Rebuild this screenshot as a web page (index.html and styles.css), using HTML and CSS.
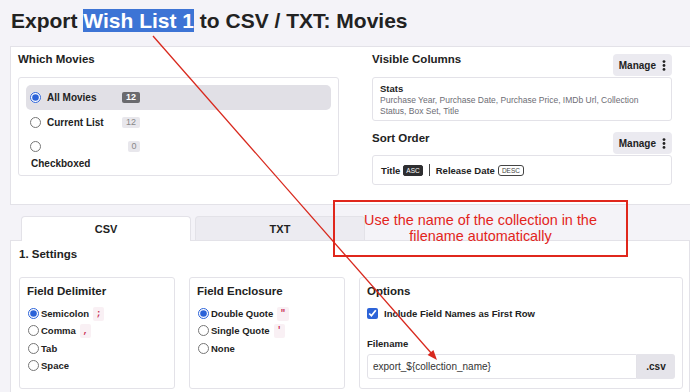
FILE: index.html
```html
<!DOCTYPE html>
<html lang="en">

<head>
    <meta charset="UTF-8">
    <meta name="viewport" content="width=device-width, initial-scale=1.0">
    <title>Export Wish List 1 to CSV / TXT: Movies</title>
    <link rel="stylesheet" href="styles.css">
</head>

<body>
    <h1 class="page-title">Export <span class="selected-text">Wish List 1</span> to CSV / TXT: Movies</h1>

    <!-- Which movies / columns / sort -->
    <div class="panel panel-top">
        <div class="col-left">
            <h2 class="section-title">Which Movies</h2>
            <div class="box choice-box">
                <label class="choice-row active">
                    <input type="radio" name="which" checked>
                    <span class="choice-main"><span>All Movies</span><span class="count dark">12</span></span>
                </label>
                <label class="choice-row">
                    <input type="radio" name="which">
                    <span class="choice-main"><span>Current List</span><span class="count wide">12</span></span>
                </label>
                <label class="choice-row">
                    <input type="radio" name="which">
                    <span class="choice-main"><span></span><span class="count">0</span></span>
                </label>
                <div class="choice-extra">Checkboxed</div>
            </div>
        </div>

        <div class="col-right">
            <div class="head-row">
                <h2 class="section-title">Visible Columns</h2>
                <button class="manage-btn">Manage
                    <svg width="4" height="11" viewBox="0 0 4 11"><circle cx="2" cy="1.6" r="1.4" fill="#222"/><circle cx="2" cy="5.5" r="1.4" fill="#222"/><circle cx="2" cy="9.4" r="1.4" fill="#222"/></svg>
                </button>
            </div>
            <div class="box columns-box">
                <div class="columns-title">Stats</div>
                <div class="columns-list">Purchase Year, Purchase Date, Purchase Price, IMDb Url, Collection Status, Box Set, Title</div>
            </div>

            <div class="head-row sort-head">
                <h2 class="section-title">Sort Order</h2>
                <button class="manage-btn">Manage
                    <svg width="4" height="11" viewBox="0 0 4 11"><circle cx="2" cy="1.6" r="1.4" fill="#222"/><circle cx="2" cy="5.5" r="1.4" fill="#222"/><circle cx="2" cy="9.4" r="1.4" fill="#222"/></svg>
                </button>
            </div>
            <div class="box sort-box">
                <span class="sort-field">Title</span>
                <span class="dir-tag filled">ASC</span>
                <span class="sort-sep"></span>
                <span class="sort-field">Release Date</span>
                <span class="dir-tag outlined">DESC</span>
            </div>
        </div>
    </div>

    <!-- Format tabs -->
    <div class="tabs">
        <div class="tab active">CSV</div>
        <div class="tab">TXT</div>
    </div>

    <div class="panel panel-settings">
        <h2 class="section-title">1. Settings</h2>
        <div class="cards">
            <div class="card card-delimiter">
                <h3 class="card-title">Field Delimiter</h3>
                <label class="opt-row"><input type="radio" name="delim" checked>Semicolon<code class="chip">;</code></label>
                <label class="opt-row"><input type="radio" name="delim">Comma<code class="chip">,</code></label>
                <label class="opt-row"><input type="radio" name="delim">Tab</label>
                <label class="opt-row"><input type="radio" name="delim">Space</label>
            </div>
            <div class="card card-enclosure">
                <h3 class="card-title">Field Enclosure</h3>
                <label class="opt-row"><input type="radio" name="encl" checked>Double Quote<code class="chip">"</code></label>
                <label class="opt-row"><input type="radio" name="encl">Single Quote<code class="chip">'</code></label>
                <label class="opt-row"><input type="radio" name="encl">None</label>
            </div>
            <div class="card card-options">
                <h3 class="card-title">Options</h3>
                <label class="opt-row check-row"><input type="checkbox" checked>Include Field Names as First Row</label>
                <div class="field-label">Filename</div>
                <div class="input-group">
                    <input class="text-input" type="text" value="export_${collection_name}">
                    <span class="input-suffix">.csv</span>
                </div>
            </div>
        </div>
    </div>

    <!-- Annotation overlay -->
    <div class="note-box">Use the name of the collection in the<br>filename automatically</div>
    <svg class="note-arrow" width="690" height="392" viewBox="0 0 690 392">
        <line x1="153" y1="36" x2="432" y2="354" stroke="#d8281d" stroke-width="1.3"/>
        <polygon points="437,360 427.6,355 433.4,349.9" fill="#d8281d"/>
    </svg>
</body>

</html>
```

FILE: styles.css
```css
/* ---- Base ---- */

body {
    margin: 0;
    position: relative;
    background-color: #f4f3f8;
    font-family: "Liberation Sans", Arial, sans-serif;
    color: #222;
    overflow: hidden;
}

.page-title {
    margin: 9px 0 13px 11px;
    font-size: 21px;
    font-weight: bold;
    line-height: 24px;
    color: #222;
}

.selected-text {
    background-color: #3d74d5;
    color: #fff;
}

.panel {
    margin-left: 10px;
    width: 680px;
    background-color: #fff;
    border: 1px solid #e3e2e8;
}

.section-title {
    margin: 0;
    font-size: 11.5px;
    line-height: 14px;
    font-weight: bold;
}

.box {
    border: 1px solid #e3e2e8;
    border-radius: 3px;
    background-color: #fff;
}

/* ---- Top panel ---- */

.panel-top {
    display: flex;
    gap: 33px;
    padding: 5px 0 19px 7px;
}

.col-left {
    width: 321px;
}

.col-right {
    width: 300px;
}

.choice-box {
    margin-top: 11px;
    padding: 7px 7px 5px;
}

.choice-row {
    display: flex;
    align-items: center;
    height: 24px;
    padding-left: 4px;
    font-size: 10px;
    font-weight: bold;
    border-radius: 5px;
}

.choice-row.active {
    height: 25px;
    background-color: #e1e0e6;
}

.choice-row input {
    width: 11px;
    height: 11px;
    margin: 0 6px 0 0;
    accent-color: #2c63d8;
}

.choice-main {
    display: flex;
    justify-content: space-between;
    align-items: center;
    width: 93px;
}

.count {
    display: inline-block;
    min-width: 12px;
    padding: 0 3px;
    box-sizing: border-box;
    height: 11px;
    line-height: 11px;
    text-align: center;
    font-size: 9px;
    font-weight: normal;
    color: #888;
    background-color: #e8e7ec;
    border-radius: 2px;
}

.count.wide {
    width: 18px;
}

.count.dark {
    width: 18px;
    font-weight: bold;
    color: #fff;
    background-color: #6a6a6e;
}

.choice-extra {
    padding-left: 5px;
    font-size: 10px;
    font-weight: bold;
    line-height: 12px;
}

.head-row {
    display: flex;
    justify-content: space-between;
    align-items: flex-start;
}

.sort-head {
    margin-top: 10px;
}

.manage-btn {
    display: flex;
    align-items: center;
    gap: 6px;
    height: 22px;
    margin-top: 2px;
    padding: 0 6px;
    border: none;
    border-radius: 4px;
    background-color: #ebeaf0;
    font-family: "Liberation Sans", Arial, sans-serif;
    font-size: 10px;
    font-weight: bold;
    color: #222;
}

.sort-head .manage-btn {
    margin-top: 1px;
}

.columns-box {
    margin-top: 1px;
    padding: 5px 7px 3px;
}

.columns-title {
    font-size: 9.5px;
    font-weight: bold;
    line-height: 12px;
}

.columns-list {
    font-size: 8.5px;
    line-height: 11px;
    color: #6d6d75;
}

.sort-box {
    display: flex;
    align-items: center;
    margin-top: 1px;
    height: 28px;
    padding: 0 8px;
}

.sort-field {
    font-size: 9.5px;
    font-weight: bold;
}

.dir-tag {
    margin-left: 3px;
    padding: 0 2px;
    font-size: 6.5px;
    line-height: 9px;
    border-radius: 2px;
}

.dir-tag.filled {
    background-color: #2e2e30;
    color: #fff;
    border: 1px solid #2e2e30;
}

.dir-tag.outlined {
    border: 1px solid #444;
    border-radius: 3px;
    color: #444;
    padding: 0 3px;
}

.sort-sep {
    width: 1px;
    height: 12px;
    margin: 0 6px;
    background-color: #444;
}

/* ---- Tabs ---- */

.tabs {
    display: flex;
    gap: 4px;
    margin: 11px 0 -1px 21px;
}

.tab {
    position: relative;
    width: 170px;
    height: 24px;
    line-height: 24px;
    text-align: center;
    font-size: 11px;
    font-weight: bold;
    background-color: #ecebf1;
    border: 1px solid #e3e2e8;
    border-bottom: none;
    border-radius: 4px 4px 0 0;
    box-sizing: border-box;
}

.tab.active {
    height: 25px;
    background-color: #fff;
    z-index: 1;
}

/* ---- Settings panel ---- */

.panel-settings {
    padding: 6px 0 0 8px;
    height: 160px;
    box-sizing: border-box;
}

.cards {
    display: flex;
    gap: 14px;
    margin-top: 16px;
}

.card {
    height: 112px;
    padding: 6px 7px 0;
    box-sizing: border-box;
    border: 1px solid #e3e2e8;
    border-radius: 3px;
}

.card-delimiter {
    width: 156px;
}

.card-enclosure {
    width: 156px;
}

.card-options {
    width: 324px;
}

.card-title {
    margin: 0 0 7px;
    font-size: 11.5px;
    line-height: 14px;
    font-weight: bold;
}

.opt-row {
    display: flex;
    align-items: center;
    height: 17.3px;
    font-size: 9.5px;
    font-weight: bold;
}

.opt-row input {
    width: 11px;
    height: 11px;
    margin: 0 2px 0 1px;
    accent-color: #2c63d8;
}

.check-row input {
    margin: 0 6px 0 0;
}

.chip {
    margin-left: 4px;
    padding: 0 3px;
    font-family: "Liberation Mono", monospace;
    font-size: 9px;
    line-height: 14px;
    color: #c7254e;
    background-color: #f9f0f4;
    border-radius: 2px;
}

.field-label {
    margin-top: 16px;
    font-size: 9.5px;
    font-weight: bold;
    line-height: 12px;
}

.input-group {
    display: flex;
    margin-top: 4px;
    height: 25px;
}

.text-input {
    flex: 1;
    margin: 0;
    padding: 0 5px;
    border: 1px solid #e3e2e8;
    border-radius: 3px 0 0 3px;
    font-family: "Liberation Sans", Arial, sans-serif;
    font-size: 10px;
    color: #333;
    outline: none;
}

.input-suffix {
    width: 38px;
    line-height: 25px;
    text-align: center;
    font-size: 10px;
    font-weight: bold;
    background-color: #e5e4ea;
    border-radius: 0 3px 3px 0;
}

/* ---- Annotation ---- */

.note-box {
    position: absolute;
    left: 333px;
    top: 200px;
    width: 295px;
    height: 57px;
    box-sizing: border-box;
    padding-top: 10px;
    border: 2px solid #e0271c;
    text-align: center;
    font-size: 14.4px;
    line-height: 16px;
    color: #e2241b;
}

.note-arrow {
    position: absolute;
    left: 0;
    top: 0;
    pointer-events: none;
}
```
